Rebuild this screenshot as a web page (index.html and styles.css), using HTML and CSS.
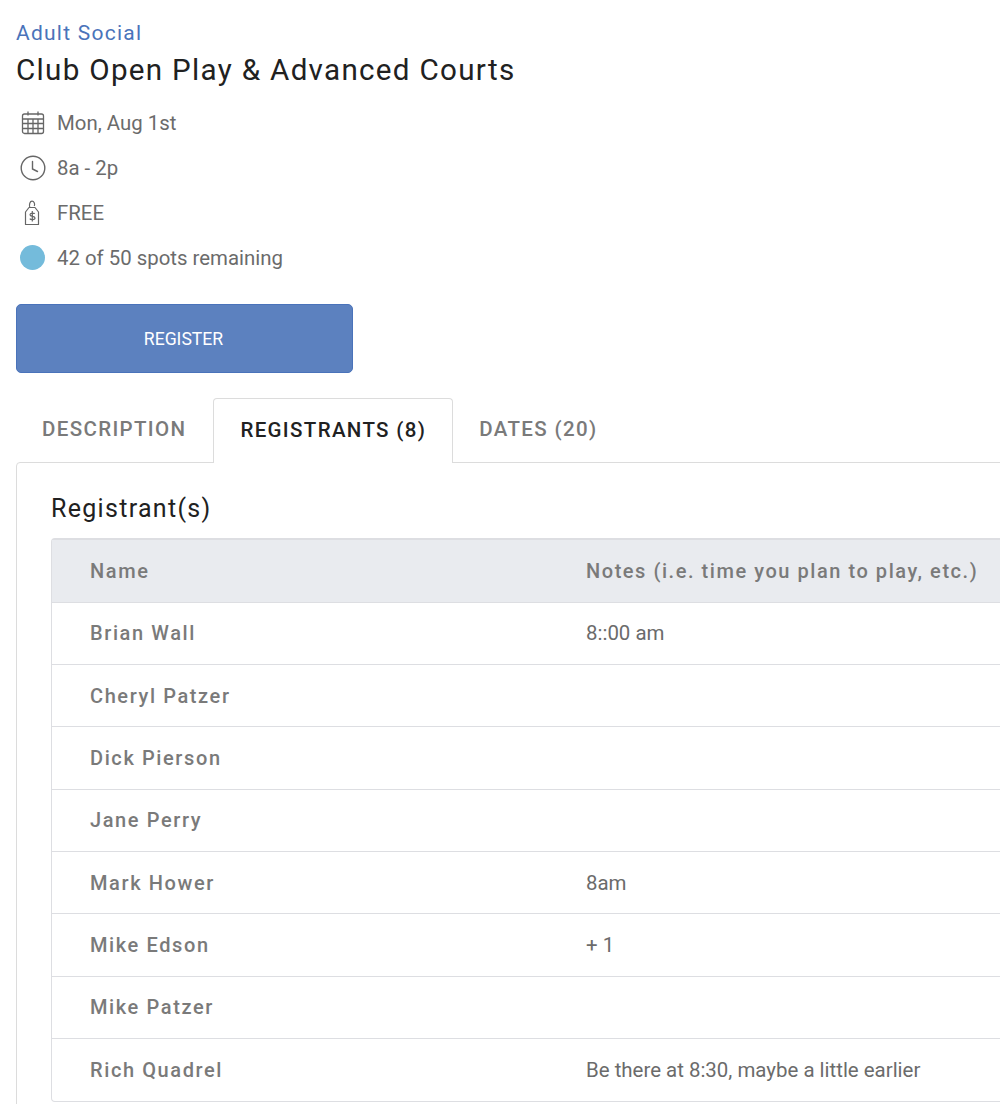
FILE: index.html
```html
<!DOCTYPE html>
<html lang="en">
<head>
    <meta charset="UTF-8">
    <title>Club Open Play &amp; Advanced Courts</title>
    <link rel="stylesheet" href="styles.css">
</head>
<body>
    <div class="event-header">
        <div class="category">Adult Social</div>
        <h1 class="event-title">Club Open Play &amp; Advanced Courts</h1>
    </div>

    <ul class="event-info">
        <li>
            <svg class="info-icon" viewBox="0 0 26 26" fill="none" stroke="#666" stroke-width="1.3">
                <rect x="2.500" y="4" width="21" height="19.500" rx="2"/>
                <path d="M2.500 9h21M2.500 13.500h21M2.500 18.500h21M8 9v14.500M13 9v14.500M18 9v14.500M8 1.500v4M18 1.500v4"/>
            </svg>
            <span>Mon, Aug 1st</span>
        </li>
        <li>
            <svg class="info-icon" viewBox="0 0 26 26" fill="none" stroke="#666" stroke-width="1.4">
                <circle cx="13" cy="13" r="11.800"/>
                <path d="M12.500 6.500v7.500l5 2.500" stroke-linecap="round"/>
            </svg>
            <span>8a - 2p</span>
        </li>
        <li>
            <svg class="info-icon" viewBox="0 0 26 26" fill="none" stroke="#666" stroke-width="1.200">
                <path d="M9 7.500L5.500 12v12.500h13V12L15 7.500z" stroke-linejoin="round"/>
                <path d="M9.800 7.500C8.800 4.500 10 1.200 12 1.200s3.200 2.300 2.300 4.800"/>
                <path d="M14.800 13.800c-.6-1-4.800-1.200-4.800.9 0 2.300 5 1 5 3.300 0 2-4.400 1.900-5.200.6M12.300 11v10.500"/>
            </svg>
            <span>FREE</span>
        </li>
        <li>
            <span class="spots-dot"></span>
            <span>42 of 50 spots remaining</span>
        </li>
    </ul>

    <button class="register-btn">REGISTER</button>

    <div class="tabs">
        <div class="tab">DESCRIPTION</div>
        <div class="tab active">REGISTRANTS (8)</div>
        <div class="tab">DATES (20)</div>
    </div>

    <div class="panel">
        <h2 class="panel-title">Registrant(s)</h2>
        <div class="table-wrap">
            <table class="registrants">
                <thead>
                    <tr><th>Name</th><th>Notes (i.e. time you plan to play, etc.)</th></tr>
                </thead>
                <tbody>
                    <tr><td>Brian Wall</td><td>8::00 am</td></tr>
                    <tr><td>Cheryl Patzer</td><td></td></tr>
                    <tr><td>Dick Pierson</td><td></td></tr>
                    <tr><td>Jane Perry</td><td></td></tr>
                    <tr><td>Mark Hower</td><td>8am</td></tr>
                    <tr><td>Mike Edson</td><td>+ 1</td></tr>
                    <tr><td>Mike Patzer</td><td></td></tr>
                    <tr><td>Rich Quadrel</td><td>Be there at 8:30, maybe a little earlier</td></tr>
                </tbody>
            </table>
        </div>
    </div>
</body>
</html>
```

FILE: styles.css
```css
/* Global */
html, body {
    overflow: hidden;
}

body {
    font-family: 'Roboto', sans-serif;
    margin: 0;
    padding: 20px 0 0 16px;
    background-color: #fff;
    color: #212121;
    height: 1104px;
    width: 1040px;
    box-sizing: border-box;
}

/* Header */
.category {
    color: #4a73ba;
    font-size: 21px;
    line-height: 26px;
    letter-spacing: 1.25px;
}

.event-title {
    font-size: 29.600px;
    line-height: 38px;
    font-weight: 400;
    letter-spacing: 1.3px;
    margin: 5px 0 0;
}

/* Date, time, price, spots */
.event-info {
    list-style: none;
    margin: 11px 0 0;
    padding: 0;
    color: #6b6b6b;
    font-size: 20.400px;
}

.event-info li {
    display: flex;
    align-items: center;
    gap: 11px;
    height: 45px;
    padding-left: 4px;
}

.info-icon {
    width: 26px;
    height: 26px;
    flex: none;
}

.spots-dot {
    width: 25px;
    height: 25px;
    margin: 0 1px 0 0;
    border-radius: 50%;
    background-color: #74bbdb;
    flex: none;
}

/* Button */
.register-btn {
    display: block;
    width: 337px;
    height: 69px;
    margin-top: 24px;
    padding: 0 2px 0 0;
    background-color: #5c81bf;
    color: #fff;
    border: 1px solid #4a73ba;
    border-radius: 5px;
    font-family: inherit;
    font-size: 17.600px;
}

/* Tabs */
.tabs {
    display: flex;
    margin-top: 25px;
    position: relative;
    z-index: 1;
}

.tab {
    height: 65px;
    box-sizing: border-box;
    padding: 18px 26px 0 25px;
    font-size: 20.500px;
    font-weight: 500;
    letter-spacing: 1.350px;
    color: #7a7a7a;
    border: 1px solid transparent;
    border-bottom: none;
}

.tab.active {
    color: #212121;
    background-color: #fff;
    border-color: #dcdcdc;
    border-radius: 4px 4px 0 0;
    padding: 19px 26px 0 26px;
}

/* Panel */
.panel {
    margin-top: -1px;
    border: 1px solid #dcdcdc;
    border-radius: 4px 0 0 0;
    padding: 28px 0 20px 34px;
}

.panel-title {
    font-size: 25px;
    line-height: 36px;
    font-weight: 400;
    letter-spacing: 1.300px;
    margin: 0 0 11px;
}

.table-wrap {
    border: 1px solid #dddee2;
    border-top-width: 2px;
    border-radius: 4px;
}

.registrants {
    width: 100%;
    border-collapse: collapse;
    table-layout: fixed;
}

.registrants th,
.registrants td {
    height: 62.300px;
    box-sizing: border-box;
    padding: 0 0 0 38px;
    text-align: left;
    font-size: 20px;
    color: #7a7a7a;
    border-top: 1px solid #dddee2;
}

.registrants th:first-child,
.registrants td:first-child {
    width: 496px;
    font-weight: 500;
    letter-spacing: 1.600px;
}

.registrants th {
    background-color: #e9ebef;
    font-weight: 500;
    letter-spacing: 1.550px;
    border-top: none;
    white-space: nowrap;
}

.registrants td:last-child {
    color: #6b6b6b;
    font-size: 20.450px;
}
```
